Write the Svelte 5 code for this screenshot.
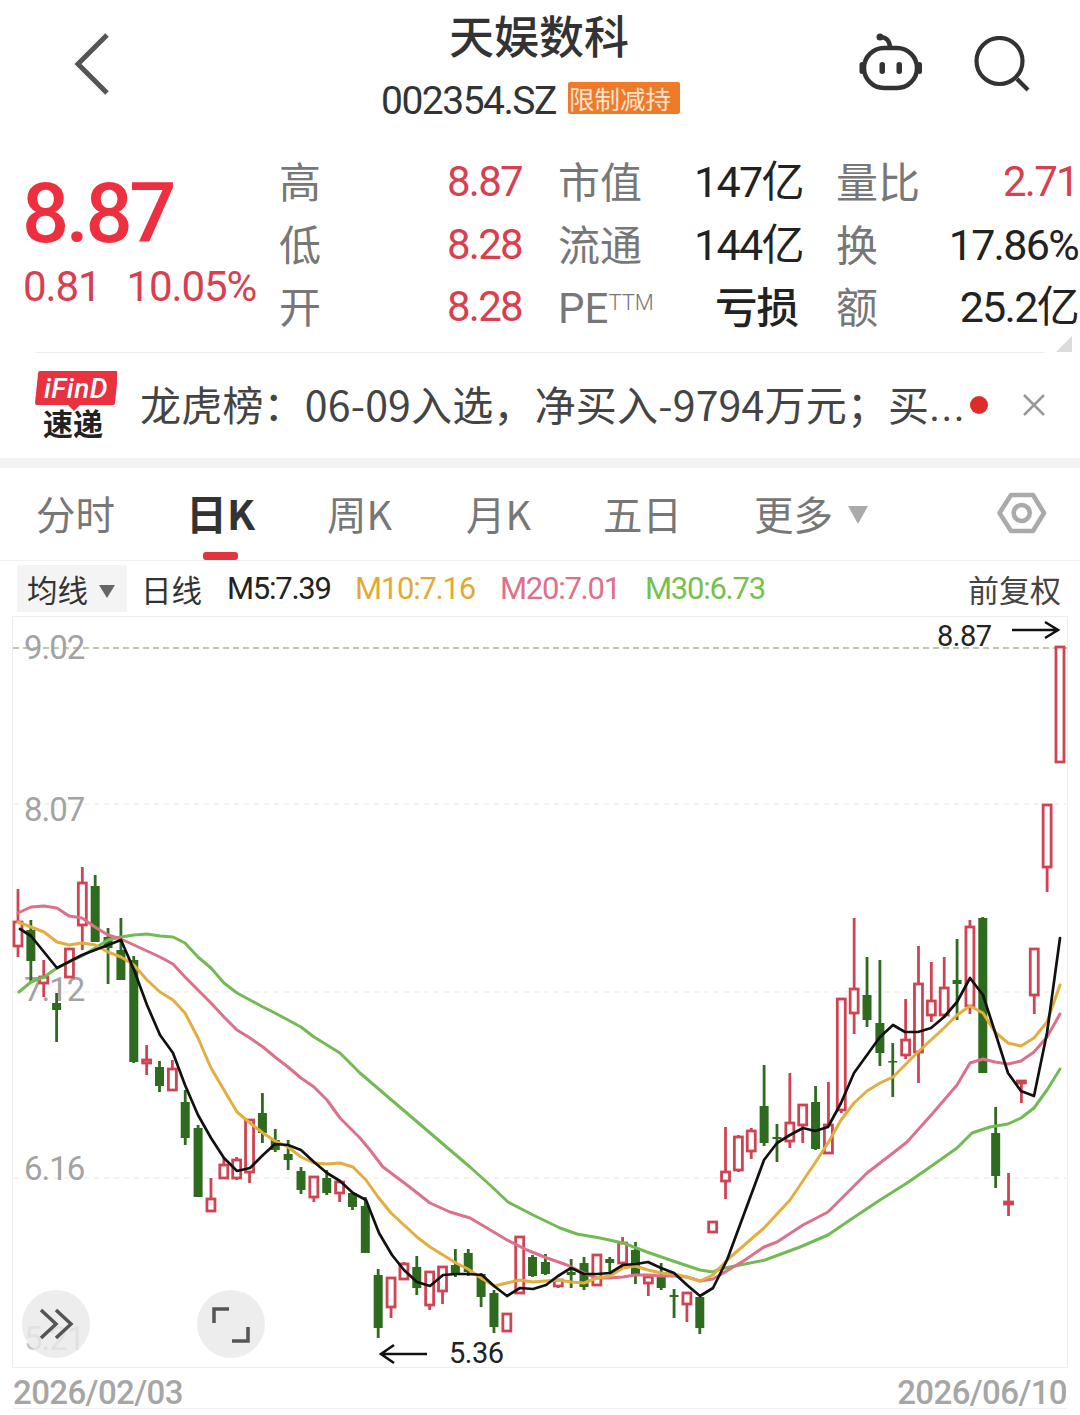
<script>
  const raw = [
    ['r',889,922,946,957],['g',920,930,961,983],['r',960,977,983,997],['g',993,1003,1010,1042],['r',949,949,977,978],
    ['r',867,883,925,950],['g',875,886,942,942],['g',928,937,948,984],['g',918,950,980,980],['g',956,960,1062,1063],
    ['r',1045,1060,1063,1075],['g',1061,1067,1086,1092],['r',1060,1069,1090,1091],['g',1090,1102,1138,1145],['g',1125,1128,1197,1197],
    ['r',1178,1199,1211,1212],['r',1157,1165,1178,1179],['r',1157,1160,1178,1180],['r',1119,1120,1172,1183],['g',1093,1113,1133,1143],
    ['g',1129,1140,1150,1152],['g',1140,1154,1160,1170],['g',1167,1171,1190,1194],['r',1177,1177,1197,1202],['g',1170,1178,1193,1195],
    ['r',1180,1182,1193,1202],['g',1192,1193,1207,1210],['g',1197,1206,1253,1253],['g',1269,1275,1328,1338],['r',1278,1278,1307,1318],
    ['r',1262,1264,1279,1280],['g',1256,1267,1288,1295],['r',1272,1272,1305,1310],['r',1267,1267,1291,1304],['g',1249,1265,1275,1277],
    ['g',1249,1253,1272,1276],['g',1273,1274,1297,1307],['g',1290,1293,1327,1333],['r',1314,1314,1331,1331],['r',1237,1237,1293,1293],
    ['g',1255,1257,1276,1277],['g',1254,1262,1274,1275],['r',1280,1280,1286,1288],['g',1259,1272,1275,1288],['g',1257,1263,1287,1290],
    ['r',1255,1255,1285,1285],['g',1257,1259,1263,1273],['r',1237,1243,1263,1263],['g',1242,1250,1274,1284],['r',1277,1277,1283,1296],
    ['g',1263,1277,1288,1290],['g',1289,1295,1297,1318],['r',1293,1293,1304,1322],['g',1297,1297,1328,1334],['r',1222,1222,1232,1232],
    ['r',1127,1172,1181,1199],['r',1135,1137,1170,1172],['r',1128,1131,1151,1159],['g',1065,1106,1143,1146],['g',1124,1137,1139,1162],
    ['r',1073,1123,1141,1148],['r',1105,1105,1125,1143],['g',1086,1102,1149,1150],['r',1082,1125,1153,1153],['r',999,999,1110,1113],
    ['r',918,989,1013,1034],['g',957,995,1020,1027],['g',960,1023,1053,1066],['g',1043,1061,1062,1097],['r',999,1040,1055,1059],
    ['r',946,984,1052,1083],['r',962,1001,1015,1022],['r',957,988,1015,1018],['g',939,980,984,1020],['r',920,927,1006,1014],
    ['g',917,918,1073,1073],['g',1107,1133,1176,1188],['r',1173,1202,1204,1216],['r',1080,1081,1083,1103],['r',949,949,995,1014],
    ['r',805,805,867,892],['r',647,647,762,762]
  ];
  const candles = raw.map((c, i) => ({ x: 18 + i * 12.864, type: c[0], high: c[1], top: c[2], bottom: c[3], low: c[4] }));

  const m5 = '20,929 31,936 57,968 82,955 95,950 108,945 121,940 134,970 147,1005 160,1035 173,1053 185,1085 198,1115 211,1138 224,1158 237,1171 250,1168 263,1155 275,1144 288,1145 301,1150 314,1162 327,1173 340,1181 353,1193 366,1200 379,1233 392,1255 404,1270 417,1282 430,1286 443,1275 456,1274 469,1274 482,1275 494,1286 507,1296 520,1288 533,1289 546,1285 558,1276 571,1268 584,1274 597,1274 610,1273 623,1265 636,1264 648,1262 661,1268 674,1273 687,1285 700,1296 713,1288 727,1260 764,1160 777,1143 790,1135 803,1128 815,1131 828,1127 841,1103 854,1073 867,1055 880,1037 893,1025 905,1032 918,1032 931,1028 944,1017 957,1002 970,978 983,995 995,1032 1008,1073 1021,1091 1034,1096 1047,1033 1060,938';
  const m10 = '18,922 31,927 44,932 57,942 69,945 82,943 95,945 108,952 121,957 134,965 147,980 160,992 173,1000 185,1013 198,1038 211,1068 224,1090 237,1112 250,1123 263,1133 275,1141 288,1147 301,1157 314,1163 327,1164 340,1163 353,1167 366,1180 378,1197 391,1213 404,1225 417,1237 430,1247 443,1255 456,1263 468,1269 481,1278 494,1286 507,1283 520,1280 533,1282 545,1281 558,1280 571,1282 584,1283 597,1278 610,1276 623,1268 635,1266 648,1270 661,1273 674,1274 687,1277 700,1281 713,1275 727,1260 764,1228 790,1200 815,1163 828,1143 841,1120 854,1103 867,1091 880,1083 893,1077 905,1065 918,1052 931,1040 944,1028 957,1015 970,1006 983,1013 995,1032 1008,1043 1021,1046 1034,1038 1047,1022 1060,985';
  const m20 = '18,913 31,907 44,906 57,908 69,916 82,918 95,927 108,935 121,939 134,945 147,951 160,957 173,964 185,977 198,990 211,1003 224,1017 237,1030 250,1038 263,1047 275,1057 288,1067 301,1078 314,1087 327,1100 340,1118 360,1138 370,1150 383,1167 407,1185 430,1203 450,1212 470,1218 487,1228 507,1240 527,1250 547,1258 567,1265 584,1273 597,1278 610,1278 623,1277 635,1275 648,1275 661,1276 674,1276 687,1277 700,1281 713,1279 720,1275 745,1260 764,1247 777,1242 803,1225 828,1212 853,1187 867,1173 893,1153 907,1142 933,1113 957,1085 970,1063 983,1059 995,1062 1008,1064 1021,1061 1034,1052 1047,1037 1060,1014';
  const m30 = '19,992 31,982 44,977 57,968 69,962 82,956 95,948 108,940 121,937 134,935 147,934 160,936 173,937 185,943 198,957 211,968 224,983 237,993 250,1000 263,1007 275,1013 288,1020 301,1027 314,1037 327,1045 340,1053 360,1073 450,1150 470,1167 490,1185 508,1202 533,1215 560,1228 577,1234 600,1238 623,1243 647,1252 673,1261 700,1270 713,1272 720,1269 765,1260 800,1247 828,1235 850,1220 880,1200 907,1183 933,1165 957,1148 972,1133 990,1127 1008,1124 1021,1118 1034,1108 1047,1090 1060,1069';
  const lines = [
    { pts: m30, cls: 'l30' }, { pts: m20, cls: 'l20' }, { pts: m10, cls: 'l10' }, { pts: m5, cls: 'l5' }
  ];
  const axis = [
    { label: '9.02', y: 659 }, { label: '8.07', y: 821 }, { label: '7.12', y: 1001 }, { label: '6.16', y: 1180 }
  ];
  const grids = [804, 992, 1178];
  const stats = [
    { a: '高', av: '8.87', b: '市值', bv: '147亿', c: '量比', cv: '2.71', cred: true },
    { a: '低', av: '8.28', b: '流通', bv: '144亿', c: '换', cv: '17.86%' },
    { a: '开', av: '8.28', b: 'PE', sup: 'TTM', bv: '亏损', loss: true, c: '额', cv: '25.2亿' }
  ];
  const tabs = [
    { t: '分时', w: 153 }, { t: '日K', w: 138, on: true }, { t: '周K', w: 139 }, { t: '月K', w: 137 }, { t: '五日', w: 151 }
  ];
</script>

<div class="page">
  <header class="top">
    <svg class="back" width="40" height="64" viewBox="0 0 40 64"><path d="M33 3 4 32l29 29" /></svg>
    <div class="name">
      <div class="title">天娱数科</div>
      <div class="code"><span class="codeno">002354.SZ</span><span class="badge">限制减持</span></div>
    </div>
    <div class="tools">
      <svg width="66" height="60" viewBox="0 0 66 60" class="robot">
        <path d="M23 4c6 0 10 4 10 11" />
        <circle cx="23" cy="4" r="3.5" class="dot" />
        <rect x="7" y="15" width="53" height="40" rx="20" />
        <rect x="2.5" y="29" width="5" height="12" rx="2.5" class="dot" />
        <rect x="60" y="29" width="5" height="12" rx="2.5" class="dot" />
        <rect x="22.5" y="29" width="5.5" height="12" rx="2.7" class="dot" />
        <rect x="39.5" y="29" width="5.5" height="12" rx="2.7" class="dot" />
      </svg>
      <svg width="58" height="56" viewBox="0 0 58 56" class="search">
        <circle cx="26.5" cy="25" r="23" />
        <path d="m44 43 11 11" />
      </svg>
    </div>
  </header>

  <section class="quote">
    <div class="price">
      <div class="big">8.87</div>
      <div class="chg"><span>0.81</span><span>10.05%</span></div>
    </div>
    <div class="stats">
      {#each stats as s}
        <div class="row">
          <span class="lab c1">{s.a}</span>
          <span class="val red c2">{s.av}</span>
          <span class="lab c3">{s.b}{#if s.sup}<sup>{s.sup}</sup>{/if}</span>
          <span class="val c4" class:loss={s.loss}>{s.bv}</span>
          <span class="lab c5">{s.c}</span>
          <span class="val c6" class:red={s.cred}>{s.cv}</span>
        </div>
      {/each}
    </div>
    <span class="fold"></span>
  </section>

  <section class="news">
    <div class="ifind">
      <svg width="82" height="40" viewBox="0 0 82 40">
        <path d="M5 0h76q2 0 2 2l-3 30q0 2-3 2H45l-6 6-6-6H2q-2 0-2-2L3 3q0-3 2-3z" class="bubble" />
        <text x="41" y="27" class="logo">iFinD</text>
      </svg>
      <span class="sub">速递</span>
    </div>
    <div class="newstext">龙虎榜：06-09入选，净买入-9794万元；买<span class="ell">...</span></div>
    <span class="reddot"></span>
    <svg class="close" width="24" height="24" viewBox="0 0 24 24"><path d="m2 2 20 20M22 2 2 22" /></svg>
  </section>

  <div class="band"></div>

  <nav class="tabs">
    {#each tabs as t}
      <div class="tab" class:on={t.on} style="width:{t.w}px">{t.t}</div>
    {/each}
    <div class="tab more">更多<span class="tri"></span></div>
    <svg class="gear" width="50" height="44" viewBox="0 0 50 44">
      <path d="M2.5 22 14 4h22l11 18-11 18H14z" />
      <circle cx="24.7" cy="22" r="8" />
    </svg>
  </nav>

  <div class="ma">
    <div class="chip">均线<span class="tri small"></span></div>
    <span class="daily">日线</span>
    <span class="mv m5">M5:7.39</span>
    <span class="mv m10">M10:7.16</span>
    <span class="mv m20">M20:7.01</span>
    <span class="mv m30">M30:6.73</span>
    <span class="adj">前复权</span>
  </div>

  <div class="chart">
    <svg width="1054" height="750" viewBox="13 617 1054 750">
      <line x1="13" y1="648" x2="1067" y2="648" class="gridtop" />
      {#each grids as y}<line x1="14" y1={y} x2="1066" y2={y} class="grid" />{/each}
      {#each axis as a}<text x="24" y={a.y} class="axis">{a.label}</text>{/each}
      <text x="24" y="1350" class="axis faint">5.21</text>
      {#each candles as c}
        {#if c.type === 'r'}
          <line x1={c.x} x2={c.x} y1={c.high} y2={c.low} class="wr" />
          <rect x={c.x - 4} y={c.top} width="8" height={Math.max(c.bottom - c.top, 1.5)} class="br" />
        {:else}
          <line x1={c.x} x2={c.x} y1={c.high} y2={c.low} class="wg" />
          <rect x={c.x - 4.5} y={c.top} width="9" height={Math.max(c.bottom - c.top, 1.5)} class="bg" />
        {/if}
      {/each}
      {#each lines as l}<polyline points={l.pts} class={l.cls} />{/each}
      <text x="937" y="646" class="mark">8.87</text>
      <path d="M1012 630h46m-13-8 13 8-13 8" class="arrow" />
      <text x="449" y="1363" class="mark">5.36</text>
      <path d="M427 1354h-46m13-9-13 9 13 9" class="arrow" />
      <circle cx="56" cy="1324" r="34" class="fab" />
      <path d="M41 1310l15 14-15 14M56 1310l15 14-15 14" class="fabi" />
      <circle cx="231" cy="1324" r="34" class="fab" />
      <path d="M214 1323v-14h15M248 1327v14h-16" class="fabi" />
    </svg>
  </div>

  <div class="dates"><span>2026/02/03</span><span>2026/06/10</span></div>
</div>

<style>
  :global(body) { margin: 0; background: #fff; }
  .page {
    width: 1080px; height: 1415px; overflow: hidden; background: #fff;
    font-family: "Noto Sans CJK SC", Roboto, sans-serif; color: #333;
  }
  .top { height: 130px; display: flex; align-items: flex-start; position: relative; }
  .back { margin: 32px 0 0 74px; flex: none; }
  .back path { fill: none; stroke: #555; stroke-width: 5; }
  .name {
    position: absolute; left: 0; right: 0; top: 0;
    display: flex; flex-direction: column; align-items: center;
  }
  .title { font-size: 45px; line-height: 44px; margin-top: 13px; color: #333; font-weight: 500; margin-left: -2px; }
  .code { display: flex; align-items: center; margin-top: 25px; margin-right: 19px; height: 34px; }
  .codeno {
    font-family: Roboto, sans-serif; font-size: 39px; letter-spacing: -1.5px; color: #333;
    margin-right: 13px; width: 174px; white-space: nowrap; line-height: 34px; margin-top: 3px;
  }
  .badge {
    width: 112px; height: 32px; background: #ef7a2a; color: #fbe3cf; border-radius: 2px;
    font-size: 25.5px; line-height: 31px; padding-left: 1px; box-sizing: border-box; margin-top: -3px; white-space: nowrap;
  }
  .tools { position: absolute; left: 857px; top: 33px; display: flex; align-items: flex-start; gap: 51px; }
  .robot path, .robot rect { fill: none; stroke: #333; stroke-width: 4.5; }
  .robot .dot { fill: #333; stroke: none; }
  .search { margin-top: 3px; margin-left: -1px; }
  .search circle, .search path { fill: none; stroke: #333; stroke-width: 4.2; }

  .quote { height: 222px; display: flex; position: relative; }
  .price { width: 281px; flex: none; padding-left: 22px; box-sizing: border-box; font-family: Roboto, sans-serif; }
  .big { font-size: 83px; line-height: 84px; margin-top: 42px; letter-spacing: -3.4px; font-weight: 500; color: #ee2f40; }
  .chg { display: flex; gap: 26px; font-size: 42px; line-height: 44px; margin-top: 9px; margin-left: 1px; letter-spacing: -1.1px; color: #d9404f; white-space: nowrap; }
  .stats { flex: 1; padding-top: 21px; }
  .row { display: flex; height: 62.5px; align-items: center; white-space: nowrap; }
  .lab { font-size: 42px; color: #777; font-weight: 400; line-height: 50px; margin-top: -4px; flex: none; }
  .val { font-family: Roboto, "Noto Sans CJK SC", sans-serif; font-size: 42px; text-align: right; color: #222; letter-spacing: -1.7px; line-height: 50px; flex: none; }
  .val.red { color: #d9404f; }
  .val.loss { font-family: "Noto Sans CJK SC", sans-serif; font-weight: 500; letter-spacing: -1px; color: #222; margin-top: -4px; font-size: 42.5px; }
  .c1 { width: 110px; margin-left: -2px; }
  .c2 { width: 133px; }
  .c3 { width: 136px; margin-left: 36px; margin-top: 4px; font-family: Roboto, "Noto Sans CJK SC", sans-serif; }
  .c4 { width: 104px; font-size: 43px; }
  .c5 { width: 90px; margin-left: 38px; }
  .c6 { width: 152px; font-size: 43px; }
  .c6.red { font-size: 42px; }
  sup { font-size: 22px; line-height: 0; vertical-align: 13px; color: #777; font-family: Roboto, sans-serif; font-weight: 300; }
  .fold {
    position: absolute; right: 8px; bottom: 0; width: 0; height: 0;
    border-left: 16px solid transparent; border-bottom: 16px solid #dcdcdc;
  }

  .news {
    height: 106px; border-top: 1.5px solid #eee; margin: 0 36px; display: flex; align-items: center;
    position: relative; box-sizing: border-box;
  }
  .ifind { width: 82px; flex: none; display: flex; flex-direction: column; align-items: center; margin-left: -1px; align-self: flex-start; margin-top: 18px; }
  .ifind svg { display: block; }
  .bubble { fill: #e8323f; }
  .logo { font: italic 500 28px Roboto, sans-serif; fill: #fff; text-anchor: middle; letter-spacing: 0.5px; }
  .sub { font-size: 30px; line-height: 30px; font-weight: 700; color: #222; margin-top: -4px; margin-right: 6px; white-space: nowrap; }
  .newstext {
    font-size: 41px; color: #444; margin-left: 23px; white-space: nowrap; letter-spacing: 0.2px; margin-top: -6px;
    font-family: "Noto Sans CJK SC", sans-serif; width: 830px; overflow: hidden;
  }
  .ell { font-family: Roboto, sans-serif; letter-spacing: 1.4px; }
  .reddot { position: absolute; left: 934px; top: 43px; width: 18px; height: 18px; border-radius: 50%; background: #e02b2b; }
  .close { position: absolute; left: 986px; top: 40px; }
  .close path { fill: none; stroke: #999; stroke-width: 2.5; }

  .band { height: 10px; background: #f3f3f3; }

  .tabs {
    height: 93px; display: flex; align-items: center; padding-left: 36px; position: relative;
    border-bottom: 1.5px solid #f0f0f0; box-sizing: border-box;
  }
  .tab { font-size: 39.5px; color: #777; white-space: nowrap; flex: none; font-weight: 400; margin-top: -4px; }
  .tab.on { color: #333; font-weight: 700; position: relative; margin-left: -3px; margin-right: 3px; font-size: 41px; }
  .tab.on::after {
    content: ""; position: absolute; left: 17px; top: 70px; width: 35px; height: 8px;
    background: #e0343f; border-radius: 3px;
  }
  .more { display: flex; align-items: center; }
  .tri {
    display: inline-block; width: 0; height: 0; margin-left: 15px; margin-top: 6px;
    border-left: 10px solid transparent; border-right: 10px solid transparent; border-top: 18px solid #aaa;
  }
  .tri.small { border-left-width: 8px; border-right-width: 8px; border-top-width: 13px; border-top-color: #666; margin-left: 11px; }
  .gear { position: absolute; left: 997px; top: 23px; }
  .gear path, .gear circle { fill: none; stroke: #aaa; stroke-width: 4.6; stroke-linejoin: round; }

  .ma { height: 55px; display: flex; align-items: center; position: relative; white-space: nowrap; }
  .chip {
    margin-left: 17px; width: 110px; height: 47px; background: #f4f4f4; display: flex; align-items: center;
    font-size: 30.5px; color: #333; padding-left: 10px; box-sizing: border-box; border-radius: 2px; flex: none;
  }
  .daily { font-size: 30.5px; margin-left: 14px; color: #333; width: 86px; flex: none; }
  .mv { font-family: Roboto, sans-serif; font-size: 31px; letter-spacing: -1.25px; flex: none; }
  .m5 { width: 128px; color: #222; }
  .m10 { width: 145px; color: #e2aa35; }
  .m20 { width: 145px; color: #e0708a; }
  .m30 { width: 120px; color: #78c04e; }
  .adj { font-size: 31px; position: absolute; left: 968px; color: #444; }

  .chart { height: 750px; margin-left: 13px; width: 1054px; border: 1px solid #eee; position: relative; left: -1px; }
  .chart svg { display: block; overflow: visible; }
  .axis { font: 33px Roboto, sans-serif; fill: #a3a3a3; letter-spacing: -1px; }
  .axis.faint { fill: #c4c4c4; }
  .mark { font: 29px Roboto, sans-serif; fill: #222; letter-spacing: -0.5px; }
  .gridtop { stroke: #a7b48f; stroke-width: 1.5; stroke-dasharray: 6 4; }
  .grid { stroke: #f0f0f0; stroke-width: 1.5; stroke-dasharray: 5 5; }
  .wr { stroke: #cf4453; stroke-width: 2.8; }
  .wg { stroke: #2f6b1e; stroke-width: 2.8; }
  .br { fill: #fff; stroke: #cf4453; stroke-width: 2.8; }
  .bg { fill: #2f6b1e; }
  polyline { fill: none; stroke-linejoin: round; stroke-linecap: round; }
  .l5 { stroke: #111; stroke-width: 2.7; }
  .l10 { stroke: #e3ad3f; stroke-width: 3; }
  .l20 { stroke: #dd708b; stroke-width: 3; }
  .l30 { stroke: #72bb52; stroke-width: 3; }
  .arrow { fill: none; stroke: #111; stroke-width: 2.6; }
  .fab { fill: #e8e8e8; fill-opacity: .8; }
  .fabi { fill: none; stroke: #555; stroke-width: 3.5; }

  .dates {
    display: flex; justify-content: space-between; width: 1054px; margin-left: 13px; height: 40px;
    font: 500 33px/50px Roboto, sans-serif; color: #a6a6a6; border-bottom: 1.5px solid #eee; letter-spacing: -0.6px;
  }
</style>
